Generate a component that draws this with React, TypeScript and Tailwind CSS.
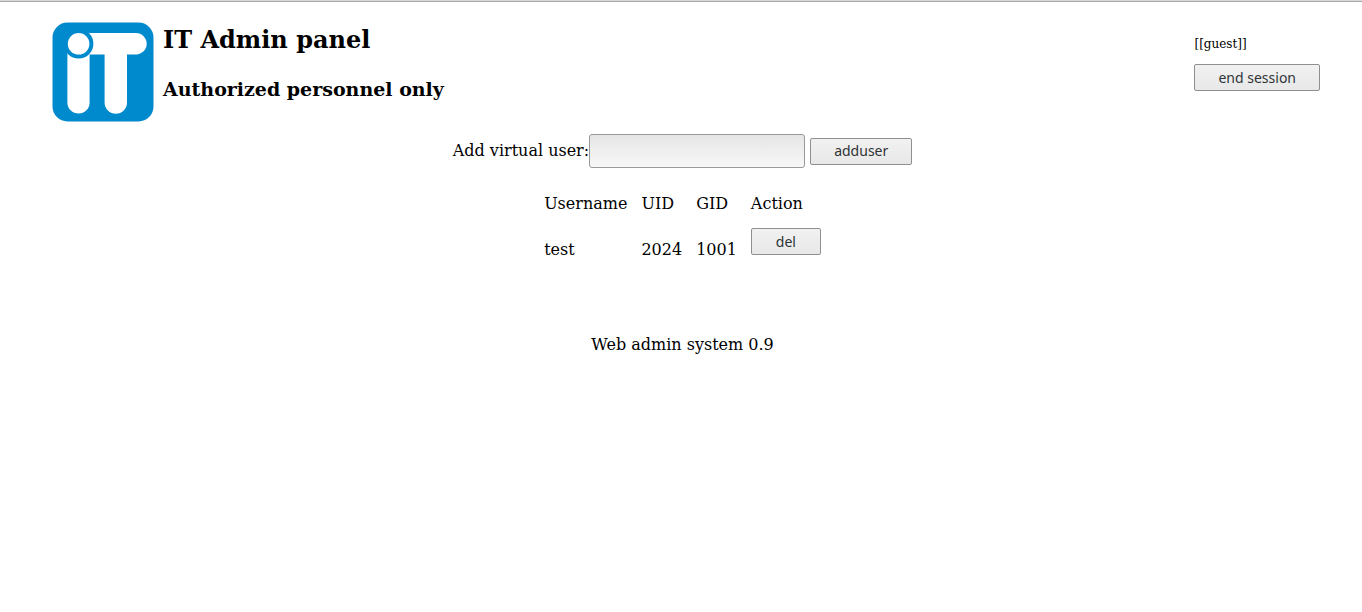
import type { ButtonHTMLAttributes } from "react";

const users = [{ name: "test", uid: 2024, gid: 1001 }];

function Logo() {
  return (
    <svg
      width="102"
      height="100"
      viewBox="0 0 102 100"
      role="img"
      aria-label="iT"
      className="shrink-0"
    >
      <rect x="0.5" y="0.5" width="101" height="99" rx="15" fill="#008ace" />
      <path
        d="M36 11H84A10.7 10.7 0 0 1 84 32.4H75V80.5A11.2 11.2 0 0 1 52.6 80.5V32.4H36Z"
        fill="#fff"
      />
      <path d="M15.4 30H37.6V80.5A11.1 11.1 0 0 1 15.4 80.5Z" fill="#fff" />
      <circle cx="26.6" cy="21.8" r="14.8" fill="#008ace" />
      <circle cx="26.6" cy="21.8" r="10.8" fill="#fff" />
    </svg>
  );
}

function Button({ children, ...props }: ButtonHTMLAttributes<HTMLButtonElement>) {
  return (
    <button
      {...props}
      className="block h-[27px] min-w-[70px] rounded-xs border border-[#8f8f8f] bg-linear-to-b from-[#f1f1f1] to-[#e8e8e8] px-[23px] font-['Noto_Sans',sans-serif] text-sm leading-6 text-[#2e3436]"
    >
      {children}
    </button>
  );
}

export default function App() {
  return (
    <div className="bg-white font-['DejaVu_Serif',serif] text-base leading-5 text-black">
      <div className="h-[2px] border-b border-[#a8a8a6] bg-[#d8d8d6]" />
      <header className="flex items-start justify-between pt-5 pr-[42px] pl-[52px]">
        <div className="flex gap-[9px]">
          <Logo />
          <div>
            <h1 className="pt-1 text-2xl leading-7 font-bold">IT Admin panel</h1>
            <h2 className="mt-[23px] text-[19px] leading-6 font-bold">
              Authorized personnel only
            </h2>
          </div>
        </div>
        <div className="pt-3">
          <p className="mb-[10px] text-xs leading-5">[[guest]]</p>
          <Button type="button">end session</Button>
        </div>
      </header>

      <main className="flex flex-col items-center pt-3 pl-[3px]">
        <form className="flex items-center" onSubmit={(e) => e.preventDefault()}>
          <label htmlFor="username" className="leading-[22px]">
            Add virtual user:
          </label>
          <input
            id="username"
            type="text"
            className="mr-[5px] h-[34px] w-[216px] rounded-[3px] border border-[#999] bg-linear-to-b from-[#e6e6e6] to-[#f7f7f7] px-2"
          />
          <Button type="submit">adduser</Button>
        </form>

        <table className="mt-[26px]">
          <thead>
            <tr className="text-left">
              <th className="pr-[14px] font-normal">Username</th>
              <th className="pr-[14px] font-normal">UID</th>
              <th className="pr-[14px] font-normal">GID</th>
              <th className="font-normal">Action</th>
            </tr>
          </thead>
          <tbody>
            {users.map((user) => (
              <tr key={user.name}>
                <td className="pt-[14px] pr-[14px]">{user.name}</td>
                <td className="pt-[14px] pr-[14px]">{user.uid}</td>
                <td className="pt-[14px] pr-[14px]">{user.gid}</td>
                <td className="pt-[14px] pb-4">
                  <Button type="button">del</Button>
                </td>
              </tr>
            ))}
          </tbody>
        </table>
      </main>

      <footer className="mt-16 pl-[3px] text-center">Web admin system 0.9</footer>
    </div>
  );
}
